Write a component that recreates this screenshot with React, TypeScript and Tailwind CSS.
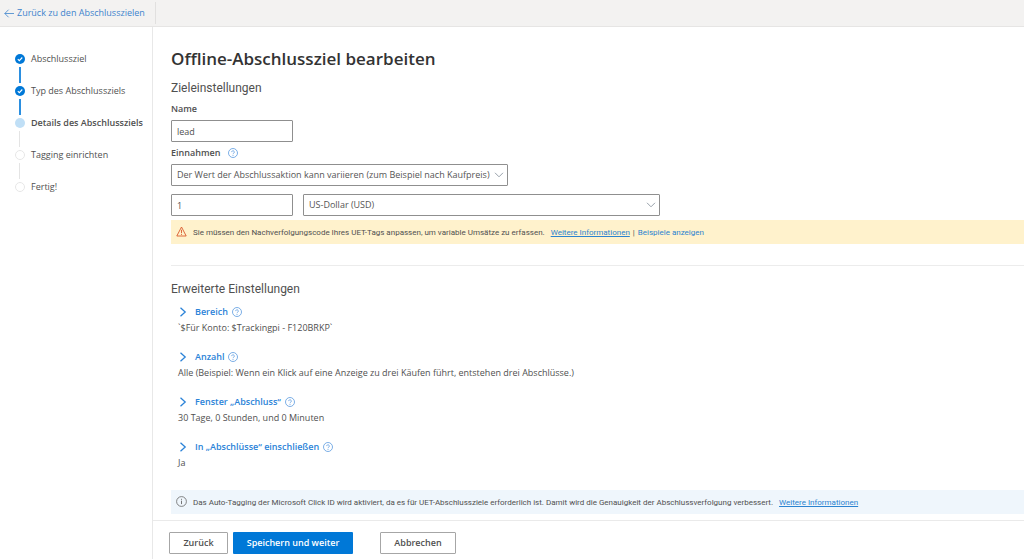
import { useState } from "react";
import type { ReactNode } from "react";
import { clsx } from "clsx";

type StepState = "done" | "current" | "open";

const steps: { label: string; state: StepState }[] = [
  { label: "Abschlussziel", state: "done" },
  { label: "Typ des Abschlussziels", state: "done" },
  { label: "Details des Abschlussziels", state: "current" },
  { label: "Tagging einrichten", state: "open" },
  { label: "Fertig!", state: "open" },
];

const settings = [
  { title: "Bereich", value: "`$Für Konto: $Trackingpi - F120BRKP`" },
  {
    title: "Anzahl",
    value: "Alle (Beispiel: Wenn ein Klick auf eine Anzeige zu drei Käufen führt, entstehen drei Abschlüsse.)",
  },
  { title: "Fenster „Abschluss“", value: "30 Tage, 0 Stunden, und 0 Minuten" },
  { title: "In „Abschlüsse“ einschließen", value: "Ja" },
];

function HelpIcon() {
  return (
    <svg className="h-[10px] w-[10px] shrink-0" viewBox="0 0 10 10" fill="none" stroke="#5b9be0" aria-hidden="true">
      <circle cx="5" cy="5" r="4.5" strokeWidth="0.8" />
      <path d="M3.7 4.1a1.3 1.3 0 1 1 2.1 1c-.5.4-.8.6-.8 1.1" strokeWidth="0.8" />
      <path d="M5 7v.8" strokeWidth="0.9" />
    </svg>
  );
}

function StepDot({ state }: { state: StepState }) {
  return (
    <svg className="h-[10px] w-[10px] shrink-0" viewBox="0 0 10 10" fill="none" aria-hidden="true">
      {state === "done" && (
        <>
          <circle cx="5" cy="5" r="5" fill="#0078d7" />
          <path d="M2.8 5.1l1.5 1.5 3-3.1" stroke="#fff" strokeWidth="1.1" />
        </>
      )}
      {state === "current" && <circle cx="5" cy="5" r="5" fill="#c0dff6" />}
      {state === "open" && <circle cx="5" cy="5" r="4.5" stroke="#e6e6e6" />}
    </svg>
  );
}

function Select({ id, label, className, children }: { id: string; label: string; className?: string; children: ReactNode }) {
  return (
    <div className={clsx("relative", className)}>
      <select
        id={id}
        aria-label={label}
        className="block h-[22px] w-full appearance-none rounded-[1px] border border-[#8f8f8f] bg-white pr-4 pl-[5px] text-[9px] text-[#555]"
      >
        {children}
      </select>
      <svg
        className="pointer-events-none absolute top-2 right-1 h-[6px] w-[10px]"
        viewBox="0 0 10 6"
        fill="none"
        stroke="#98a1aa"
        aria-hidden="true"
      >
        <path d="M1 .8l4 4 4-4" />
      </svg>
    </div>
  );
}

export default function App() {
  const [name, setName] = useState("lead");
  const [amount, setAmount] = useState("1");

  return (
    <div className="flex min-h-screen flex-col bg-white font-['Open_Sans','Noto_Sans',sans-serif] text-[9px] leading-3 text-[#505050]">
      <header className="flex h-[27px] items-center border-b border-[#e6e5e4] bg-[#f3f2f1] pl-1">
        <a href="#ziele" className="flex w-[151px] items-center gap-[3px] text-[#3e84cd]">
          <svg className="h-[9px] w-[10px]" viewBox="0 0 10 9" fill="none" stroke="currentColor" strokeWidth="0.8" aria-hidden="true">
            <path d="M10 4.5H.8M4.6.7L.8 4.5l3.8 3.8" />
          </svg>
          Zurück zu den Abschlusszielen
        </a>
        <div className="h-[22px] w-px bg-[#e1e0df]" />
      </header>

      <div className="flex grow">
        <nav className="w-[153px] shrink-0 border-r border-[#e8e8e8] pt-6 pl-[15px]">
          <ol>
            {steps.map((step, i) => (
              <li key={step.label}>
                <div
                  className={clsx("flex h-4 items-center gap-[6px]", step.state === "current" && "font-semibold")}
                  aria-current={step.state === "current" ? "step" : undefined}
                >
                  <StepDot state={step.state} />
                  <span className="whitespace-nowrap">{step.label}</span>
                </div>
                {i < steps.length - 1 && (
                  <div className={clsx("ml-1 h-4", step.state === "done" ? "w-[2px] bg-[#2b8fe0]" : "w-px bg-[#e4e4e4]")} />
                )}
              </li>
            ))}
          </ol>
        </nav>

        <main className="flex min-w-0 grow flex-col">
          <div className="grow pl-[18px]">
            <h1 className="pt-5 text-[17px] leading-6 font-semibold text-[#333]">Offline-Abschlussziel bearbeiten</h1>
            <h2 className="mt-[9px] font-[Roboto,sans-serif] text-[12px] leading-4">Zieleinstellungen</h2>

            <label htmlFor="name" className="mt-[7px] block font-semibold">
              Name
            </label>
            <input
              id="name"
              value={name}
              onChange={(e) => setName(e.target.value)}
              className="mt-[5px] block h-[22px] w-[122px] rounded-[1px] border border-[#8f8f8f] px-[5px]"
            />

            <div className="mt-[5px] flex items-center gap-2">
              <label htmlFor="revenue" className="font-semibold">
                Einnahmen
              </label>
              <HelpIcon />
            </div>
            <Select id="revenue" label="Einnahmen" className="mt-[5px] w-[337px]">
              <option>Der Wert der Abschlussaktion kann variieren (zum Beispiel nach Kaufpreis)</option>
            </Select>
            <div className="mt-2 flex gap-[10px]">
              <input
                aria-label="Betrag"
                value={amount}
                onChange={(e) => setAmount(e.target.value)}
                className="h-[22px] w-[122px] rounded-[1px] border border-[#8f8f8f] px-[5px]"
              />
              <Select id="currency" label="Währung" className="w-[357px]">
                <option>US-Dollar (USD)</option>
              </Select>
            </div>

            <div className="mt-1 flex h-6 items-center bg-[#fff2cc] pt-[2px] pl-[5px] font-[Roboto,sans-serif] text-[8px]">
              <svg className="mr-[6px] mb-1 h-[11px] w-[11px]" viewBox="0 0 11 11" fill="none" stroke="#d9592b" aria-hidden="true">
                <path d="M5.5 1L.8 10h9.4z" strokeWidth="0.9" />
                <path d="M5.5 3.8v3.4M5.5 8v.9" strokeWidth="0.9" />
              </svg>
              <span>Sie müssen den Nachverfolgungscode Ihres UET-Tags anpassen, um variable Umsätze zu erfassen.</span>
              <a href="#info" className="ml-[6px] text-[#2b83d0] underline">
                Weitere Informationen
              </a>
              <span className="mx-[3px]">|</span>
              <a href="#beispiele" className="text-[#2b83d0]">
                Beispiele anzeigen
              </a>
            </div>

            <hr className="mt-[21px] border-[#ececec]" />

            <h2 className="mt-[15px] mb-[9px] font-[Roboto,sans-serif] text-[12px] leading-4">Erweiterte Einstellungen</h2>
            <div className="flex flex-col gap-[17px] pl-[7px]">
              {settings.map((item) => (
                <section key={item.title}>
                  <div className="flex items-center gap-1">
                    <button type="button" className="flex items-center gap-[8px] font-semibold text-[#2b83d8]">
                      <svg className="ml-px h-[10px] w-2" viewBox="0 0 8 10" fill="none" stroke="currentColor" strokeWidth="1.3" aria-hidden="true">
                        <path d="M1.5 .8L6.2 5l-4.7 4.2" />
                      </svg>
                      {item.title}
                    </button>
                    <HelpIcon />
                  </div>
                  <p className="mt-1">{item.value}</p>
                </section>
              ))}
            </div>

            <div className="mt-[21px] flex h-6 items-center bg-[#eff6fc] pt-[2px] pl-[5px] font-[Roboto,sans-serif] text-[8px]">
              <svg className="mr-[6px] mb-1 h-[11px] w-[11px]" viewBox="0 0 11 11" fill="none" stroke="#666" aria-hidden="true">
                <circle cx="5.5" cy="5.5" r="4.9" strokeWidth="0.8" />
                <path d="M5.5 4.7v3.4M5.5 2.8v1" strokeWidth="0.9" />
              </svg>
              <span>
                Das Auto-Tagging der Microsoft Click ID wird aktiviert, da es für UET-Abschlussziele erforderlich ist. Damit wird die
                Genauigkeit der Abschlussverfolgung verbessert.
              </span>
              <a href="#info" className="ml-[6px] text-[#2b83d0] underline">
                Weitere Informationen
              </a>
            </div>
          </div>

          <footer className="flex border-t border-[#eaeaea] pt-[11px] pb-[5px] pl-4 font-semibold">
            <button type="button" className="h-[22px] w-[59px] rounded-[1px] border border-[#a6a6a6]">
              Zurück
            </button>
            <button type="button" className="ml-[5px] h-[22px] w-[120px] rounded-[1px] bg-[#0078d7] text-white">
              Speichern und weiter
            </button>
            <button type="button" className="ml-[27px] h-[22px] w-[76px] rounded-[1px] border border-[#a6a6a6]">
              Abbrechen
            </button>
          </footer>
        </main>
      </div>
    </div>
  );
}
